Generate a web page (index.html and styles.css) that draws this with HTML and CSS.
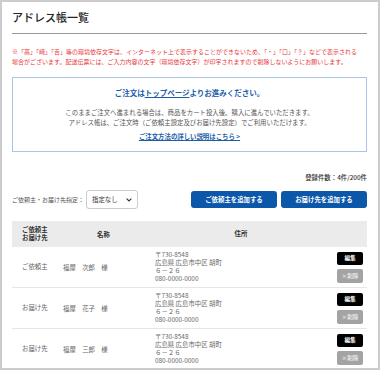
FILE: index.html
```html
<!DOCTYPE html>
<html lang="ja">
<head>
<meta charset="UTF-8">
<meta name="viewport" content="width=device-width, initial-scale=1.0">
<title>アドレス帳一覧</title>
<link rel="stylesheet" href="styles.css">
</head>
<body>

<div class="page">
    <h1 class="page-title">アドレス帳一覧</h1>

    <p class="notice">※「髙」「﨑」「𠮷」等の環境依存文字は、インターネット上で表示することができないため、「・」「口」「？」などで表示される<br>場合がございます。配送伝票には、ご入力内容の文字（環境依存文字）が印字されますので削除しないようにお願いします。</p>

    <div class="info-box">
        <p class="info-head">ご注文は<a href="#">トップページ</a>よりお進みください。</p>
        <p class="info-text">このままご注文へ進まれる場合は、商品をカート投入後、購入に進んでいただきます。<br>アドレス帳は、ご注文時（ご依頼主設定及びお届け先設定）でご利用いただけます。</p>
        <p class="info-link"><a href="#">ご注文方法の詳しい説明はこちら &gt;</a></p>
    </div>

    <p class="count">登録件数：4件/200件</p>

    <div class="toolbar">
        <label for="kind">ご依頼主・お届け先指定：</label>
        <select id="kind">
            <option>指定なし</option>
            <option>ご依頼主</option>
            <option>お届け先</option>
        </select>
        <div class="toolbar-buttons">
            <button class="btn-add">ご依頼主を追加する</button>
            <button class="btn-add">お届け先を追加する</button>
        </div>
    </div>

    <div class="address-table">
        <div class="row head">
            <div class="cell kind">ご依頼主<br>お届け先</div>
            <div class="cell name">名称</div>
            <div class="cell addr">住所</div>
            <div class="cell ops"></div>
        </div>
        <div class="row">
            <div class="cell kind">ご依頼主</div>
            <div class="cell name">福屋　次郎　様</div>
            <div class="cell addr">〒730-8548<br>広島県 広島市中区 胡町<br>６－２６<br>080-0000-0000</div>
            <div class="cell ops">
                <button class="btn-edit">編集</button>
                <button class="btn-del">×削除</button>
            </div>
        </div>
        <div class="row">
            <div class="cell kind">お届け先</div>
            <div class="cell name">福屋　花子　様</div>
            <div class="cell addr">〒730-8548<br>広島県 広島市中区 胡町<br>６－２６<br>080-0000-0000</div>
            <div class="cell ops">
                <button class="btn-edit">編集</button>
                <button class="btn-del">×削除</button>
            </div>
        </div>
        <div class="row">
            <div class="cell kind">お届け先</div>
            <div class="cell name">福屋　三郎　様</div>
            <div class="cell addr">〒730-8548<br>広島県 広島市中区 胡町<br>６－２６<br>080-0000-0000</div>
            <div class="cell ops">
                <button class="btn-edit">編集</button>
                <button class="btn-del">×削除</button>
            </div>
        </div>
    </div>
</div>

</body>
</html>
```

FILE: styles.css
```css
body {
    margin: 0;
    padding: 0;
    font-family: "Noto Sans CJK JP", "Noto Sans", sans-serif;
    color: #444;
    background: #fff;
}

.page {
    box-sizing: border-box;
    width: 380px;
    height: 370px;
    border: 2px solid #ccc;
    padding: 0 11px 0 10px;
    overflow: hidden;
}

p {
    margin: 0;
}

.page-title {
    margin: 0;
    padding: 7px 0 8px;
    font-size: 11px;
    line-height: 16px;
    font-weight: 500;
    color: #222;
    border-bottom: 1px solid #999;
}

.notice {
    margin-top: 13px;
    font-size: 6px;
    line-height: 10px;
    color: #e8383d;
}

.info-box {
    margin-top: 10px;
    padding: 9px 0 9px;
    border: 1px solid #a9c6ea;
    text-align: center;
}

.info-head {
    font-size: 7.5px;
    line-height: 12px;
    font-weight: bold;
    color: #1b5ea8;
}

.info-head a {
    color: #1b5ea8;
    text-decoration: underline;
}

.info-text {
    margin-top: 9px;
    font-size: 6.4px;
    line-height: 10px;
    color: #555;
}

.info-link {
    margin-top: 4px;
    font-size: 6.4px;
    line-height: 10px;
    font-weight: bold;
}

.info-link a {
    color: #1b5ea8;
    text-decoration: underline;
}

.count {
    margin-top: 21px;
    text-align: right;
    font-size: 6.4px;
    line-height: 10px;
    font-weight: 500;
    color: #333;
}

.toolbar {
    display: flex;
    align-items: center;
    margin-top: 7px;
    height: 19px;
}

.toolbar label {
    font-size: 6px;
    color: #555;
    margin-right: 2px;
}

.toolbar select {
    appearance: none;
    -webkit-appearance: none;
    width: 52px;
    height: 19px;
    padding: 0 0 0 5px;
    border: 1px solid #ccc;
    border-radius: 3px;
    font-family: inherit;
    font-size: 6.4px;
    color: #333;
    background: #fff url("data:image/svg+xml;utf8,<svg xmlns='http://www.w3.org/2000/svg' width='6' height='4' viewBox='0 0 6 4'><path d='M0.6 0.6 L3 3 L5.4 0.6' fill='none' stroke='%23333' stroke-width='1.1'/></svg>") no-repeat right 5px center;
}

.toolbar-buttons {
    display: flex;
    gap: 4px;
    margin-left: auto;
}

.btn-add {
    width: 86px;
    height: 17px;
    padding: 0;
    border: none;
    border-radius: 3px;
    background-color: #0b57aa;
    color: #fff;
    font-family: inherit;
    font-size: 6.4px;
    font-weight: bold;
    cursor: pointer;
}

.address-table {
    margin-top: 12px;
    font-size: 6.4px;
    color: #666;
}

.row {
    display: grid;
    grid-template-columns: 43px 97px 178px 1fr;
    align-items: center;
    height: 40px;
    border-bottom: 1px solid #e6e6e6;
}

.row.head {
    height: 26px;
    background-color: #ebebeb;
    border-bottom: none;
    font-weight: bold;
    color: #333;
}

.cell.kind {
    padding-left: 10px;
    line-height: 8px;
}

.cell.name {
    padding-left: 8px;
}

.cell.addr {
    padding-left: 3px;
    line-height: 7.8px;
}

.head .cell.name,
.head .cell.addr {
    text-align: center;
    padding-left: 0;
}

.cell.ops {
    display: flex;
    flex-direction: column;
    align-items: flex-end;
    gap: 4px;
    padding-right: 4px;
}

.btn-edit,
.btn-del {
    width: 26px;
    height: 13px;
    padding: 0;
    border: none;
    border-radius: 2px;
    font-family: inherit;
    font-size: 5.6px;
    font-weight: bold;
    color: #fff;
    cursor: pointer;
}

.btn-edit {
    background-color: #000;
}

.btn-del {
    height: 14px;
    background-color: #a3a3a3;
    font-weight: normal;
}
```
